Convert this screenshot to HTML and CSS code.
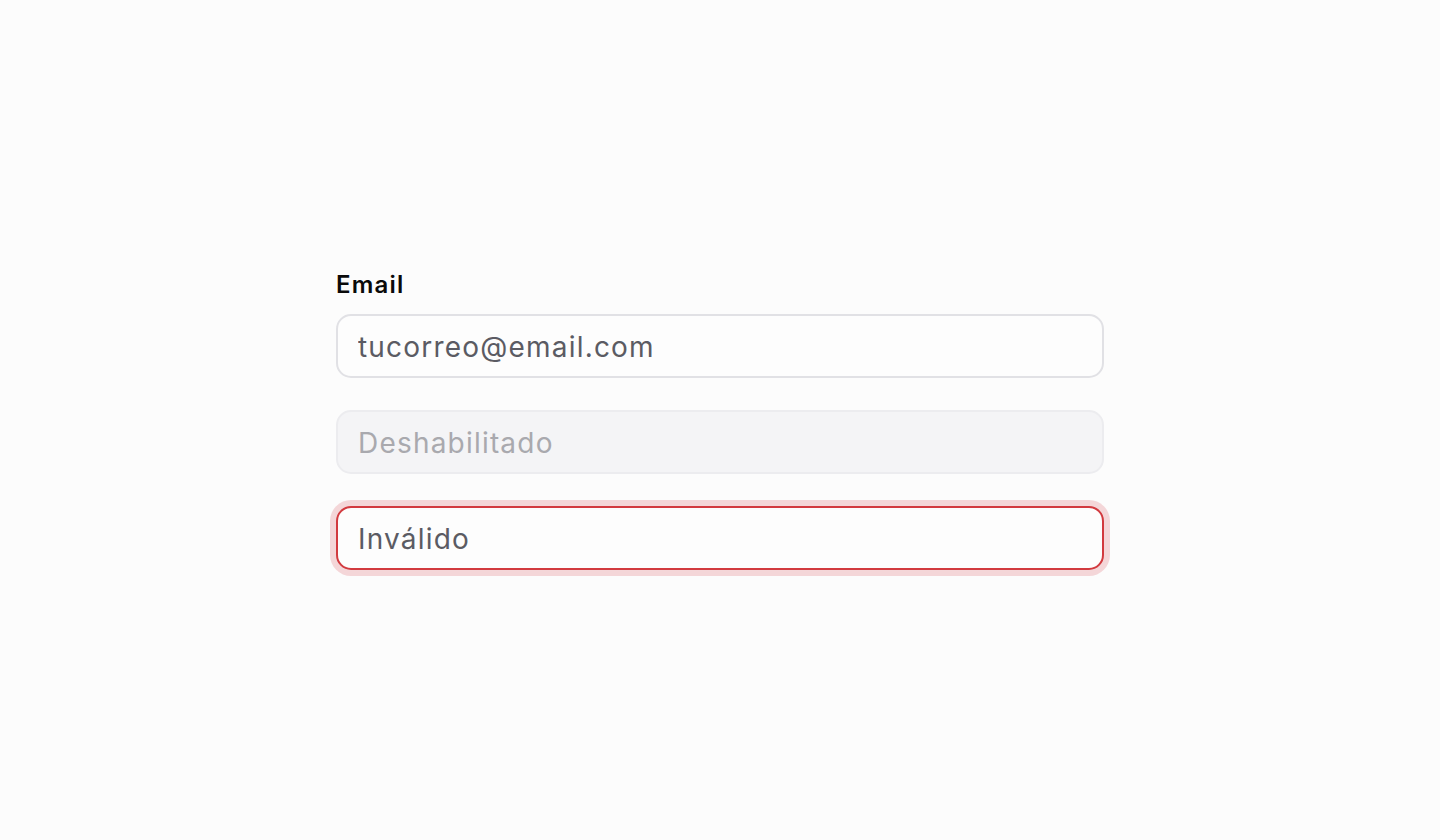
FILE: index.html
```html
<!DOCTYPE html>
<html lang="es">
<head>
<meta charset="utf-8">
<title>Inputs</title>
<link rel="stylesheet" href="styles.css">
</head>
<body>
<main class="page">
  <div class="form">
    <div class="field">
      <label class="label" for="email">Email</label>
      <input class="input" id="email" type="text" placeholder="tucorreo@email.com">
    </div>
    <input class="input input--disabled" type="text" placeholder="Deshabilitado" disabled>
    <input class="input input--invalid" type="text" placeholder="Inválido">
  </div>
</main>
</body>
</html>
```

FILE: styles.css
```css
* { box-sizing: border-box; }
html, body { margin: 0; padding: 0; }
body {
  background: #fcfcfc;
  font-family: Inter, "Noto Sans", "Liberation Sans", sans-serif;
}
.page {
  width: 1440px;
  height: 840px;
  display: flex;
  align-items: center;
  justify-content: center;
}
.form {
  width: 768px;
  display: flex;
  flex-direction: column;
  gap: 32px;
}
.field {
  display: flex;
  flex-direction: column;
  gap: 15px;
}
.label {
  font-size: 24px;
  font-weight: 600;
  color: #0a0a0a;
  line-height: 28px;
  letter-spacing: 1.2px;
}
.input {
  width: 100%;
  height: 64px;
  padding: 2px 20px 0;
  border: 2px solid #e1e1e5;
  border-radius: 15px;
  background: #fdfdfd;
  font-family: inherit;
  font-size: 28px;
  letter-spacing: 1.2px;
  color: #5b5b63;
  outline: none;
}
.input::placeholder { color: #5b5b63; opacity: 1; }
.input--disabled {
  background: #f4f4f6;
  border-color: #ececef;
}
.input--disabled::placeholder { color: #a9a9ae; }
.input--invalid {
  border-color: #d23a3f;
  box-shadow: 0 0 0 6px #f4d6d8;
}
```
